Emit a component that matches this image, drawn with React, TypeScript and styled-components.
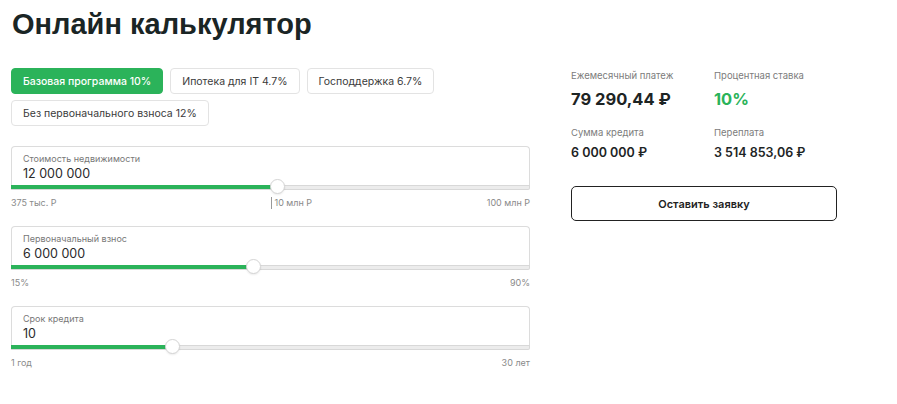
import React from 'react';
import styled, { createGlobalStyle } from 'styled-components';

const GREEN = '#2bb35a';

const GlobalStyle = createGlobalStyle`
  body {
    margin: 0;
    background: #fff;
    font-family: Inter, "Noto Sans", sans-serif;
    color: #1d2424;
  }
`;

const Page = styled.div`
  padding: 6px 0 0 11px;
  width: 886px;
`;

const Title = styled.h1`
  margin: 0 0 26px 1px;
  font-family: "Liberation Sans", Arial, sans-serif;
  font-size: 29px;
  font-weight: 700;
  line-height: 36px;
  color: #1a2525;
`;

const Columns = styled.div`
  display: flex;
  gap: 41px;
`;

const LeftCol = styled.div`
  width: 519px;
`;

const Tabs = styled.div`
  display: flex;
  flex-wrap: wrap;
  gap: 6px 7px;
  width: 440px;
  margin-bottom: 20px;
`;

const Tab = styled.button<{ $active?: boolean }>`
  height: 26px;
  padding: 0 11px;
  border-radius: 4px;
  border: 1px solid ${p => (p.$active ? GREEN : '#e3e3e3')};
  background: ${p => (p.$active ? GREEN : '#fff')};
  color: ${p => (p.$active ? '#fff' : '#3a3a3a')};
  font-family: Inter, sans-serif;
  font-size: 10.5px;
  font-weight: ${p => (p.$active ? 500 : 400)};
  cursor: pointer;
`;

const FieldGroup = styled.div`
  margin-bottom: 17px;
`;

const Field = styled.div`
  border: 1px solid #dcdcdc;
  border-bottom: none;
  border-radius: 4px 4px 0 0;
  padding: 6px 11px 2px;
  height: 30px;
`;

const FieldLabel = styled.div`
  font-size: 9px;
  color: #777;
  line-height: 12px;
`;

const FieldValue = styled.div`
  font-size: 12.5px;
  color: #2a2a2a;
  line-height: 16px;
  margin-top: 1px;
`;

const Track = styled.div`
  position: relative;
  height: 3px;
  background: #ececec;
  border: 1px solid #d8d8d8;
  border-left: none;
  border-radius: 0 0 2px 0;
`;

const Fill = styled.div`
  position: absolute;
  left: 0;
  top: -1px;
  height: 4px;
  background: ${GREEN};
`;

const Thumb = styled.div`
  position: absolute;
  top: -7px;
  width: 15px;
  height: 15px;
  margin-left: -8px;
  border-radius: 50%;
  background: #fff;
  border: 1px solid #d4d4d4;
  box-shadow: 0 1px 2px rgba(0, 0, 0, 0.08);
  box-sizing: border-box;
`;

const Scale = styled.div`
  position: relative;
  display: flex;
  justify-content: space-between;
  margin-top: 7px;
  font-size: 9px;
  color: #8a8a8a;
  line-height: 12px;
`;

const Mark = styled.span`
  position: absolute;
  top: 0;
  padding-left: 3px;
  border-left: 1px solid #999;
`;

const RightCol = styled.div`
  width: 266px;
  padding-top: 2px;
`;

const Stats = styled.div`
  display: grid;
  grid-template-columns: 143px 123px;
  row-gap: 18px;
  margin-bottom: 25px;
`;

const StatLabel = styled.div`
  font-size: 9.5px;
  color: #7c7c7c;
  line-height: 12px;
`;

const StatValue = styled.div<{ $big?: boolean; $green?: boolean }>`
  margin-top: ${p => (p.$big ? 7 : 6)}px;
  font-size: ${p => (p.$big ? 16.5 : 12.5)}px;
  font-weight: ${p => (p.$big ? 700 : 600)};
  line-height: ${p => (p.$big ? 20 : 16)}px;
  color: ${p => (p.$green ? GREEN : '#1d2424')};
`;

const SubmitButton = styled.button`
  width: 266px;
  height: 35px;
  border: 1px solid #222;
  border-radius: 5px;
  background: #fff;
  font-family: Inter, sans-serif;
  font-size: 11px;
  font-weight: 600;
  color: #222;
  cursor: pointer;
`;

type SliderProps = {
  label: string;
  value: string;
  percent: number;
  min: string;
  max: string;
  mark?: { label: string; at: number };
};

const SliderField: React.FC<SliderProps> = ({ label, value, percent, min, max, mark }) => (
  <FieldGroup>
    <Field>
      <FieldLabel>{label}</FieldLabel>
      <FieldValue>{value}</FieldValue>
    </Field>
    <Track>
      <Fill style={{ width: `${percent}%` }} />
      <Thumb style={{ left: `${percent}%` }} />
    </Track>
    <Scale>
      <span>{min}</span>
      {mark && <Mark style={{ left: `${mark.at}%` }}>{mark.label}</Mark>}
      <span>{max}</span>
    </Scale>
  </FieldGroup>
);

const tabs = ['Базовая программа 10%', 'Ипотека для IT 4.7%', 'Господдержка 6.7%', 'Без первоначального взноса 12%'];

export default function App() {
  return (
    <Page>
      <GlobalStyle />
      <Title>Онлайн калькулятор</Title>
      <Columns>
        <LeftCol>
          <Tabs>
            {tabs.map((t, i) => (
              <Tab key={t} $active={i === 0}>{t}</Tab>
            ))}
          </Tabs>
          <SliderField
            label="Стоимость недвижимости"
            value="12 000 000"
            percent={51.6}
            min="375 тыс. Р"
            max="100 млн Р"
            mark={{ label: '10 млн Р', at: 50 }}
          />
          <SliderField
            label="Первоначальный взнос"
            value="6 000 000"
            percent={47}
            min="15%"
            max="90%"
          />
          <SliderField
            label="Срок кредита"
            value="10"
            percent={31.3}
            min="1 год"
            max="30 лет"
          />
        </LeftCol>
        <RightCol>
          <Stats>
            <div>
              <StatLabel>Ежемесячный платеж</StatLabel>
              <StatValue $big>79 290,44 ₽</StatValue>
            </div>
            <div>
              <StatLabel>Процентная ставка</StatLabel>
              <StatValue $big $green>10%</StatValue>
            </div>
            <div>
              <StatLabel>Сумма кредита</StatLabel>
              <StatValue>6 000 000 ₽</StatValue>
            </div>
            <div>
              <StatLabel>Переплата</StatLabel>
              <StatValue>3 514 853,06 ₽</StatValue>
            </div>
          </Stats>
          <SubmitButton>Оставить заявку</SubmitButton>
        </RightCol>
      </Columns>
    </Page>
  );
}
